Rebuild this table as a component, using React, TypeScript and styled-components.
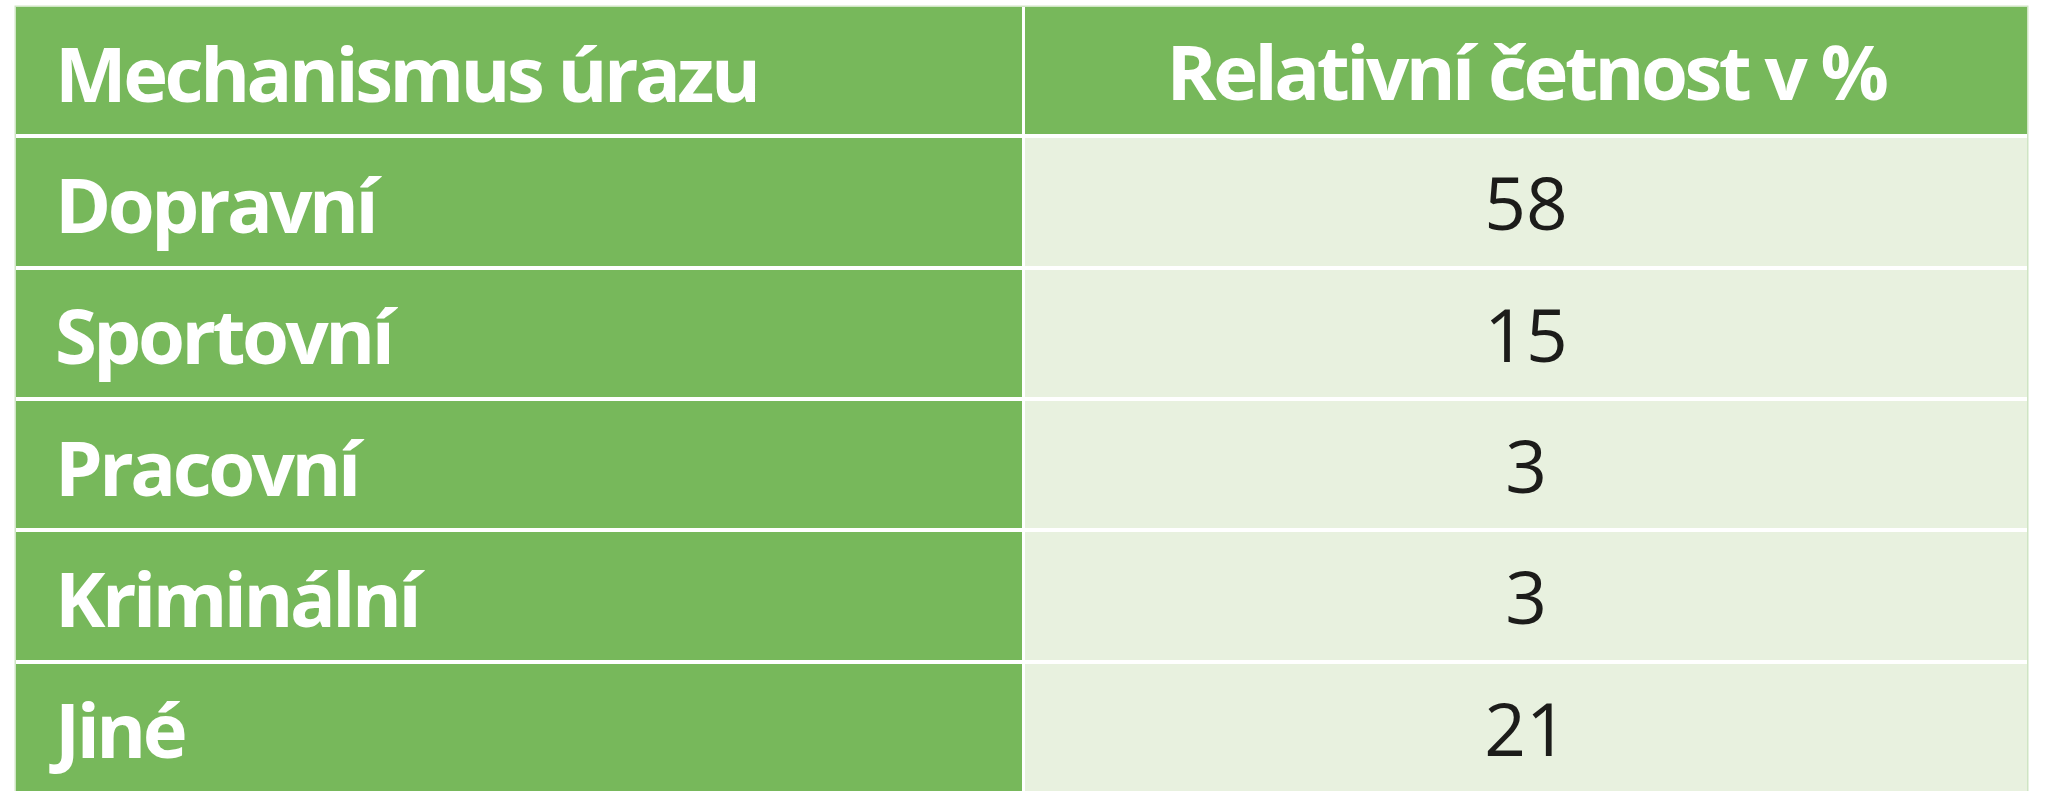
import React from "react";
import styled, { createGlobalStyle } from "styled-components";

const GlobalStyle = createGlobalStyle`
  html, body {
    margin: 0;
    padding: 0;
    background: #ffffff;
  }
  body {
    font-family: "Open Sans", "Noto Sans", "DejaVu Sans", sans-serif;
  }
`;

const Page = styled.div`
  padding: 7px 0 0 16px;
`;

const Table = styled.div`
  width: 2011px;
  height: 784px;
  display: grid;
  grid-template-columns: 1006px 1002px;
  grid-template-rows: repeat(6, 1fr);
  column-gap: 3px;
  row-gap: 4px;
  background: #ffffff;
  box-shadow: 0 0 0 1.5px #cfe5c4;
`;

const Cell = styled.div<{ $head?: boolean; $align?: "left" | "center" }>`
  display: flex;
  align-items: center;
  justify-content: ${(p) => (p.$align === "center" ? "center" : "flex-start")};
  padding: ${(p) => (p.$align === "center" ? "0" : "4px 0 0 39px")};
  background: ${(p) => (p.$head ? "#77b85b" : "#e8f1df")};
  color: ${(p) => (p.$head ? "#ffffff" : "#1c1c1a")};
  font-size: ${(p) => (p.$head ? "76px" : "73px")};
  font-weight: ${(p) => (p.$head ? 700 : 400)};
  letter-spacing: ${(p) => (p.$head ? "-3.5px" : "0")};
  line-height: 1;
  white-space: nowrap;
`;

const rows: [string, string][] = [
  ["Dopravní", "58"],
  ["Sportovní", "15"],
  ["Pracovní", "3"],
  ["Kriminální", "3"],
  ["Jiné", "21"],
];

export default function App() {
  return (
    <Page>
      <GlobalStyle />
      <Table>
        <Cell $head>Mechanismus úrazu</Cell>
        <Cell $head $align="center">
          Relativní četnost v %
        </Cell>
        {rows.map(([label, value]) => (
          <React.Fragment key={label}>
            <Cell $head>{label}</Cell>
            <Cell $align="center">{value}</Cell>
          </React.Fragment>
        ))}
      </Table>
    </Page>
  );
}
